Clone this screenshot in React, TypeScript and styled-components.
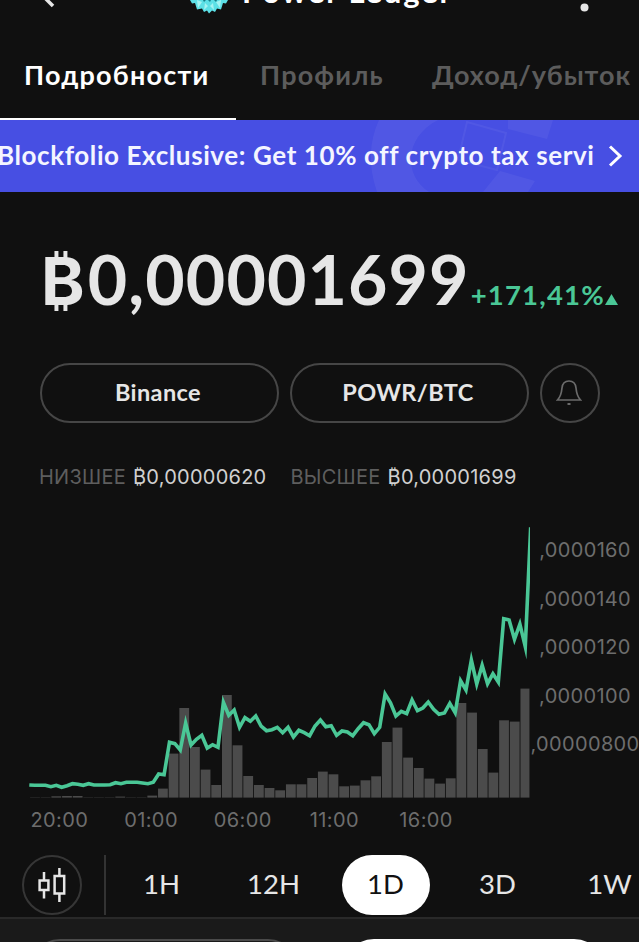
import styled, { createGlobalStyle } from "styled-components";

const GlobalStyle = createGlobalStyle`
  * {
    box-sizing: border-box;
  }

  body {
    margin: 0;
    background: #101010;
    color: #e6e6e6;
    font-family: Lato, "Open Sans", sans-serif;
    overflow: hidden;
  }

  button {
    font: inherit;
    color: inherit;
    background: none;
    border: none;
    padding: 0;
    white-space: nowrap;
  }
`;

const Screen = styled.div`
  height: 942px;
  overflow: hidden;
  display: flex;
  flex-direction: column;
`;

const Header = styled.header`
  height: 40px;
  flex: none;
  display: flex;
  align-items: flex-start;
  padding: 0 49px 0 38px;

  .title {
    margin: -29px 0 0 13px;
    font-size: 31px;
    line-height: 40px;
    font-weight: 700;
    letter-spacing: 1.8px;
    color: #fff;
    white-space: nowrap;
  }

  .logo {
    margin-left: 133px;
  }

  .more {
    margin-left: auto;
  }
`;

const Tabs = styled.nav`
  height: 80px;
  flex: none;
  display: flex;
`;

const Tab = styled.button<{ $active?: boolean; $width: number; $spacing: number }>`
  flex: none;
  width: ${({ $width }) => $width}px;
  padding: 0 0 9px 24px;
  text-align: left;
  font-size: 27px;
  font-weight: 700;
  letter-spacing: ${({ $spacing }) => $spacing}px;
  color: ${({ $active }) => ($active ? "#fff" : "#5c5c5c")};
  border-bottom: 2px solid ${({ $active }) => ($active ? "#fff" : "transparent")};
`;

const Banner = styled.div`
  position: relative;
  height: 72px;
  flex: none;
  display: flex;
  align-items: center;
  background: #474fe3;
  color: #f4f5ff;
  overflow: hidden;

  .watermark {
    position: absolute;
    left: 365px;
    top: 0;
  }

  .message {
    position: relative;
    width: 599px;
    margin-left: -3px;
    padding-bottom: 2px;
    font-size: 26px;
    font-weight: 700;
    letter-spacing: 0.6px;
    white-space: nowrap;
  }

  .arrow {
    position: relative;
    margin-left: 12px;
  }
`;

const PriceRow = styled.div`
  height: 171px;
  flex: none;
  display: flex;
  align-items: baseline;
  padding: 46px 0 0 41px;
  white-space: nowrap;
`;

const Price = styled.div`
  font-size: 68px;
  line-height: 82px;
  font-weight: 700;
  letter-spacing: 1.1px;

  .sign {
    margin-right: 2px;
    font-family: Inter, sans-serif;
    font-size: 66px;
  }
`;

const Change = styled.div`
  display: flex;
  align-items: baseline;
  margin-left: 1px;
  font-size: 27.5px;
  font-weight: 700;
  letter-spacing: 1.2px;
  color: #4ac796;
`;

const Markets = styled.div`
  display: flex;
  flex: none;
  gap: 11px;
  padding-left: 40px;
`;

const Pill = styled.button<{ $round?: boolean }>`
  width: ${({ $round }) => ($round ? 60 : 239)}px;
  height: 60px;
  border: 2px solid #464646;
  border-radius: 30px;
  display: flex;
  align-items: center;
  justify-content: center;
  padding: 0 3px 2px 0;
  font-size: 23.5px;
  font-weight: 700;
  letter-spacing: 0.4px;
`;

const Stats = styled.dl`
  flex: none;
  display: flex;
  align-items: center;
  height: 97px;
  margin: 0;
  padding: 10px 0 0 39px;
  font-family: Inter, sans-serif;
  font-size: 20px;
  letter-spacing: 0.25px;
  white-space: nowrap;

  dt {
    color: #5e5e5e;
  }

  dd {
    margin: 0 24px 0 7px;
    color: #d0d0d0;
  }
`;

const ChartArea = styled.div`
  flex: none;
  height: 280px;
  display: flex;

  svg {
    flex: none;
  }
`;

const PriceAxis = styled.div`
  flex: 1;
  display: flex;
  flex-direction: column;
  align-items: center;
  padding-top: 6px;
  margin: 0 -4px 0 -3px;
  font-family: Inter, sans-serif;
  font-size: 20px;
  line-height: 48.6px;
  letter-spacing: 0.35px;
  color: #6d6d6d;
  white-space: nowrap;
`;

const TimeAxis = styled.div`
  flex: none;
  display: flex;
  height: 55px;
  padding: 8px 0 0 13.5px;
  font-family: Inter, sans-serif;
  font-size: 20px;
  line-height: 24px;
  letter-spacing: 0.4px;
  color: #6d6d6d;

  span {
    width: 91.7px;
    text-align: center;
  }
`;

const Ranges = styled.div`
  flex: none;
  height: 62px;
  display: flex;
  align-items: flex-start;
  padding-left: 22px;
`;

const ChartToggle = styled.button`
  width: 60px;
  height: 60px;
  flex: none;
  border: 2px solid #363636;
  border-radius: 50%;
  display: flex;
  align-items: center;
  justify-content: center;
`;

const Divider = styled.div`
  width: 2px;
  height: 60px;
  flex: none;
  margin: 0 12px 0 22px;
  background: #333;
`;

const Range = styled.button<{ $active?: boolean }>`
  flex: none;
  width: 88px;
  height: 60px;
  margin-right: 24px;
  padding: 0 1px 3px 0;
  border-radius: 30px;
  font-size: 27.5px;
  background: ${({ $active }) => ($active ? "#fff" : "none")};
  color: ${({ $active }) => ($active ? "#111" : "#e6e6e6")};
`;

const Footer = styled.footer`
  flex: 1;
  display: flex;
  gap: 46px;
  padding: 20px 0 0 30px;
  border-top: 2px solid #292929;
  background: #1a1a1a;
  overflow: hidden;
`;

const FooterButton = styled.button<{ $filled?: boolean }>`
  flex: none;
  width: ${({ $filled }) => ($filled ? 260 : 268)}px;
  height: 60px;
  border: 2px solid ${({ $filled }) => ($filled ? "#fff" : "#4a4a4a")};
  border-radius: 30px;
  background: ${({ $filled }) => ($filled ? "#fff" : "none")};
`;

// heights in px, one bar per half an hour
const volumes = [
  0.3, 0.3, 1.3, 1.6, 1.6, 0.3, 0.3, 0.3, 1, 0.3, 0.3, 2, 9, 44, 89.6, 50.6,
  28, 12.6, 102.6, 52.3, 21.6, 12.6, 9.6, 7.3, 13.3, 13.3, 19.6, 26, 23.3,
  11.3, 12, 17.3, 21.3, 55.6, 70, 40, 29.6, 19, 14, 19.3, 94.6, 85, 48.6, 25,
  77.3, 76, 109,
];

const prices = [
  265, 265.3, 265.3, 265.3, 266.7, 265.3, 267.3, 265.7, 263.7, 264.3, 265.3,
  263.7, 265, 265, 265, 264.7, 262.7, 263.7, 262.3, 262.3, 262.3, 263, 263.7,
  262.3, 254, 254.7, 222.3, 223.7, 230, 203, 225, 219.3, 215.3, 228, 224.7,
  227.3, 182.3, 195.3, 190, 207.3, 197.7, 201.3, 196, 206, 210.7, 209.7,
  207.3, 212.7, 207.3, 217, 210.3, 212.7, 215.7, 206, 200, 206.7, 205.7,
  215.3, 211, 212, 215.7, 208.7, 202.7, 204.7, 213.7, 207.3, 174, 182.7, 196,
  191.3, 193.7, 180, 190.7, 188, 182, 189.3, 194.3, 193, 183.3, 192.7, 160.7,
  170, 140, 164, 145.3, 163.7, 153.7, 162, 98.7, 100, 119.3, 104, 126.7, 7.3,
];

const BAR_STEP = 10.66;
const PRICE_STEP = 5.391;
const BASELINE = 277.6;

const Chart: React.FC = () => (
  <svg width="530" height="280" viewBox="0 0 530 280">
    {volumes.map((height, i) => (
      <rect
        key={i}
        x={30.1 + i * BAR_STEP}
        y={BASELINE - height}
        width={i === volumes.length - 1 ? 9 : 9.8}
        height={height}
        fill="#4b4b4b"
      />
    ))}
    <polyline
      points={prices.map((y, i) => `${29.3 + i * PRICE_STEP},${y}`).join(" ")}
      fill="none"
      stroke="#4ac796"
      strokeWidth="3.6"
      strokeMiterlimit="8"
    />
  </svg>
);

const Logo: React.FC = () => (
  <svg className="logo" width="40" height="14" viewBox="0 0 40 14">
    <path
      d="M1 0 3 3.500 6 3 8 9.500 13 8.500 15 12 18 10.500 20 13.500 23 10.500 26 12 28 8.500 32 9.500 34 3 37 3.500 39 0Z"
      fill="#5ce0e6"
    />
    <path
      d="M8 0 9 8 13 2ZM16 3 15 10 19 6ZM24 3 25 10 21 6ZM32 0 31 8 27 2Z"
      fill="#a4f3f2"
    />
    <path d="M14 0h3l-2 2ZM19 0h3l-1 2ZM25 0h3l-1 2Z" fill="#167e87" />
  </svg>
);

const ranges = ["1H", "12H", "1D", "3D", "1W"];

const App: React.FC = () => (
  <Screen>
    <GlobalStyle />
    <Header>
      <svg width="18" height="10" viewBox="0 0 18 10">
        <path d="M6-3 15 6" stroke="#e6e6e6" strokeWidth="3.500" />
      </svg>
      <Logo />
      <div className="title">Power Ledger</div>
      <svg className="more" width="10" height="14" viewBox="0 0 10 14">
        <circle cx="4.500" cy="7.500" r="4" fill="#e6e6e6" />
      </svg>
    </Header>
    <Tabs>
      <Tab $active $width={236} $spacing={1.2}>
        Подробности
      </Tab>
      <Tab $width={172} $spacing={1.2}>
        Профиль
      </Tab>
      <Tab $width={240} $spacing={0.9}>
        Доход/убыток
      </Tab>
    </Tabs>
    <Banner>
      <svg className="watermark" width="200" height="72" viewBox="0 0 200 72">
        <g fill="#fff" fillOpacity="0.05">
          <path d="M14 0H73C38 18 39 56 64 72H12C3 45 4 22 14 0Z" />
          <path d="M143 0h45l-6 19-39-10ZM135 51l35 10-7 11h-45Z" />
        </g>
        <path
          d="M102 2l39 11-9 37-39-10Z"
          fill="none"
          stroke="#fff"
          strokeOpacity="0.05"
          strokeWidth="2"
        />
      </svg>
      <div className="message">
        Blockfolio Exclusive: Get 10% off crypto tax servi
      </div>
      <svg className="arrow" width="16" height="22" viewBox="0 0 16 22">
        <path d="M2 1.500 12 11 2 20.500" fill="none" stroke="#fff" strokeWidth="3" />
      </svg>
    </Banner>
    <PriceRow>
      <Price>
        <span className="sign">₿</span>0,00001699
      </Price>
      <Change>
        +171,41%
        <svg width="13" height="11" viewBox="0 0 13 11">
          <path d="M6.500 0 13 11H0Z" fill="#4ac796" />
        </svg>
      </Change>
    </PriceRow>
    <Markets>
      <Pill>Binance</Pill>
      <Pill>POWR/BTC</Pill>
      <Pill $round>
        <svg width="26" height="28" viewBox="0 0 26 28" fill="none">
          <path
            d="M1.500 22C5 18.500 5.500 15 6 10C6.500 5 9 3 13 3S19.500 5 20 10C20.500 15 21 18.500 24.500 22Z"
            stroke="#6b6b6b"
            strokeWidth="1.700"
          />
          <path d="M11.500 26h3" stroke="#6b6b6b" strokeWidth="2" />
        </svg>
      </Pill>
    </Markets>
    <Stats>
      <dt>НИЗШЕЕ</dt>
      <dd>₿0,00000620</dd>
      <dt>ВЫСШЕЕ</dt>
      <dd>₿0,00001699</dd>
    </Stats>
    <ChartArea>
      <Chart />
      <PriceAxis>
        <span>,0000160</span>
        <span>,0000140</span>
        <span>,0000120</span>
        <span>,0000100</span>
        <span>,00000800</span>
      </PriceAxis>
    </ChartArea>
    <TimeAxis>
      <span>20:00</span>
      <span>01:00</span>
      <span>06:00</span>
      <span>11:00</span>
      <span>16:00</span>
    </TimeAxis>
    <Ranges>
      <ChartToggle>
        <svg width="28" height="36" viewBox="0 0 28 36" fill="none">
          <path
            d="M6 5v8.500M6 23v8.500M1.600 13.500h8.800v9.500h-8.800ZM21.400 1v8M21.400 26.500v8.500M16.600 9h9.600v17.500H16.600Z"
            stroke="#e6e6e6"
            strokeWidth="2.500"
          />
        </svg>
      </ChartToggle>
      <Divider />
      {ranges.map((range) => (
        <Range key={range} $active={range === "1D"}>
          {range}
        </Range>
      ))}
    </Ranges>
    <Footer>
      <FooterButton />
      <FooterButton $filled />
    </Footer>
  </Screen>
);

export default App;
